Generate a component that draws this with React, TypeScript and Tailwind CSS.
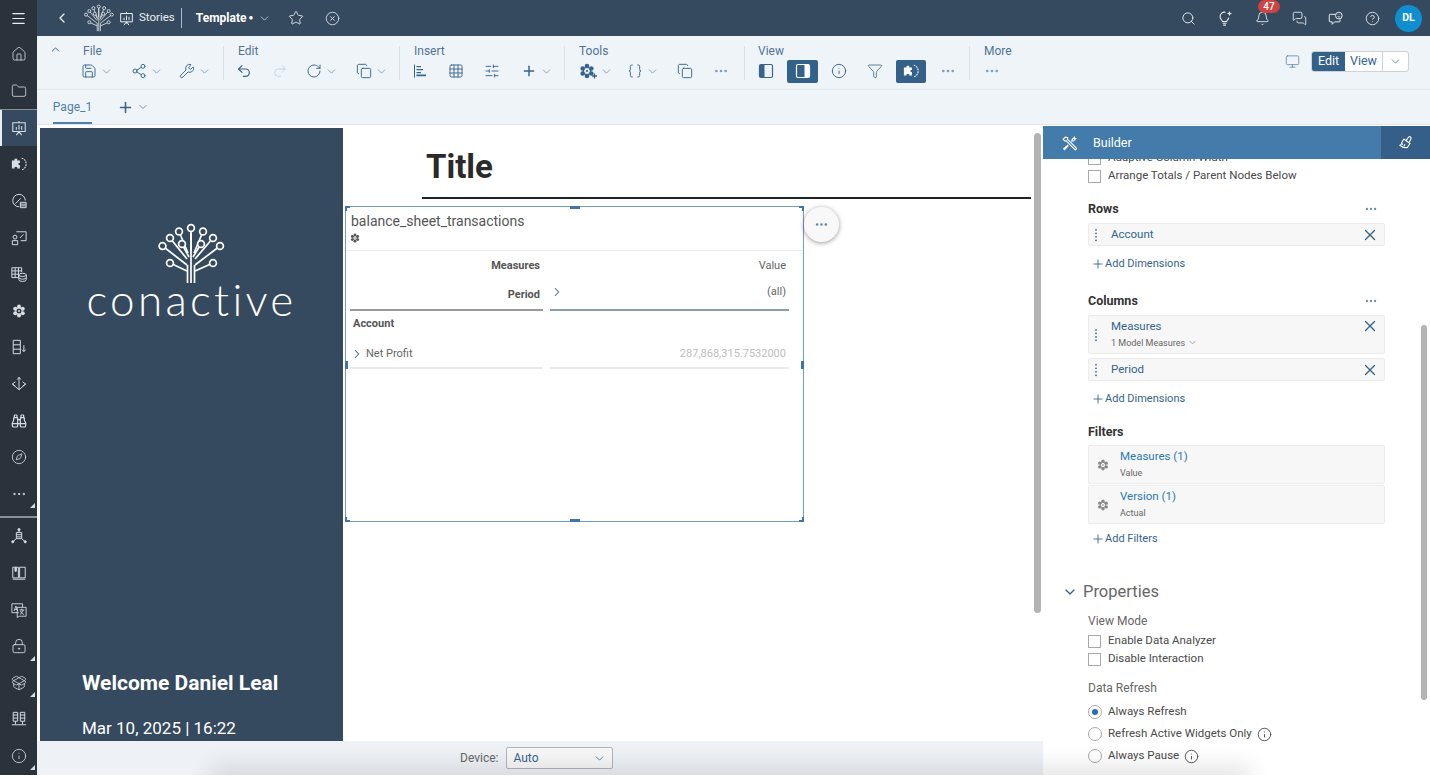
import React from 'react';
import {
  Menu, ChevronLeft, ChevronDown, ChevronUp, ChevronRight, Star, CircleX, Search, Bell, MessagesSquare, CircleHelp,
  House, Folder, Binoculars, Compass, Ellipsis, LockKeyhole, PackageOpen, Info, Save, Share2, Wrench, Undo2, Redo2,
  RotateCw, Copy, Grid3x3, SlidersHorizontal, Plus, Braces, Funnel, Monitor, X,
} from 'lucide-react';

type P = { className?: string };

function Tree({ className }: P) {
  const nodes = [[33, 5, 33, 28], [21, 8.5, 30, 30], [45, 8.5, 36, 30], [12, 15, 29, 36], [55, 15, 37, 36], [4.5, 23, 29, 42], [62, 23, 37, 42], [24, 21, 31, 34], [43, 21, 35, 34], [12, 40, 29, 48], [55, 40, 37, 48]];
  return (
    <svg viewBox="0 0 67 61" className={className} fill="none" stroke="currentColor" strokeWidth="1.7">
      <path d="M29.5 60V42M33 60V10M36.5 60V42" />
      {nodes.map(([x, y, tx, ty], i) => (
        <g key={i}>
          <line x1={x} y1={y} x2={tx} y2={ty} />
          <circle cx={x} cy={y} r="3.4" fill="#354a5f" />
        </g>
      ))}
    </svg>
  );
}

function Cube({ className, plus }: P & { plus?: boolean }) {
  const pts = [[8, 3], [12.3, 5.5], [12.3, 10.5], [8, 13], [3.7, 10.5], [3.7, 5.5]];
  return (
    <svg viewBox={plus ? '0 0 18 16' : '0 0 16 16'} className={className} fill="currentColor">
      {pts.map(([x, y], i) => <circle key={i} cx={x} cy={y} r="2.3" />)}
      <circle cx="8" cy="8" r="3.6" fill="none" stroke="currentColor" strokeWidth="1.2" />
      <circle cx="8" cy="8" r="1.1" />
      {plus && <path d="M13 13h5M15.500 10.500v5" stroke="currentColor" strokeWidth="1.300" />}
    </svg>
  );
}

function PuzzleGear({ className }: P) {
  return (
    <svg viewBox="0 0 18 16" className={className} fill="currentColor">
      <path d="M1 4h3V2h3v2h3v3H8.500v2H10v4H7v-1.500H4V13H1z" />
      <path fill="none" stroke="currentColor" strokeWidth="1.300" strokeDasharray="2 1" d="M12 1.500c3.200.6 5 3.400 5 6.500s-1.800 5.900-5 6.500" />
    </svg>
  );
}

function PanelLeft({ className }: P) {
  return (
    <svg viewBox="0 0 16 16" className={className}>
      <rect x="1.500" y="1.500" width="13" height="13" rx="1.500" fill="none" stroke="currentColor" strokeWidth="1.200" />
      <path d="M2 2h4.500v12H2z" fill="currentColor" />
    </svg>
  );
}

function PanelRight({ className }: P) {
  return (
    <svg viewBox="0 0 16 16" className={className}>
      <rect x="1.500" y="1.500" width="13" height="13" rx="1.500" fill="none" stroke="currentColor" strokeWidth="1.200" />
      <path d="M9.500 2H14v12H9.500z" fill="currentColor" />
    </svg>
  );
}

function ChartBars({ className }: P) {
  return (
    <svg viewBox="0 0 16 16" className={className} fill="currentColor">
      <path d="M2 1.500h1v13H2zM4.500 3H9v1.200H4.500zM4.500 6H11v1.200H4.500zM4.500 9H9v1.200H4.500zM4.500 11.500H14v1.800H4.500z" />
    </svg>
  );
}

function Story({ className }: P) {
  return (
    <svg viewBox="0 0 18 18" className={className} fill="none" stroke="currentColor" strokeWidth="1.200">
      <path d="M2 3h14v10H2zM9 1v2M9 13v2M6 17l3-4 3 4" />
      <path d="M6 11V8M9 11V5.500M12 11V7" />
    </svg>
  );
}

function GaugeDoc({ className }: P) {
  return (
    <svg viewBox="0 0 18 18" className={className} fill="none" stroke="currentColor" strokeWidth="1.100">
      <path d="M9 15.500a7 7 0 117-7" />
      <path d="M5 12l6-6" />
      <path d="M10.500 10.500H17v6h-6.500zM10.500 12.500H17M10.500 14.500H17" />
    </svg>
  );
}

function BoardEdit({ className }: P) {
  return (
    <svg viewBox="0 0 18 18" className={className} fill="none" stroke="currentColor" strokeWidth="1.100">
      <path d="M6 2h11v10h-6" />
      <circle cx="4.500" cy="8" r="2.200" />
      <path d="M1.500 16.500v-4.500h6v4.500zM10 9l4-4" />
    </svg>
  );
}

function TableDb({ className }: P) {
  return (
    <svg viewBox="0 0 18 18" className={className} fill="none" stroke="currentColor" strokeWidth="1.100">
      <path d="M8.500 13H1V2h11v5M1 5.500h11M1 9.200h7.500M4.700 2v11M8.400 2v11" />
      <ellipse cx="13" cy="10" rx="4.200" ry="1.800" />
      <path d="M8.800 10v5.500c0 1 1.900 1.800 4.200 1.800s4.200-.8 4.200-1.800V10M8.800 13c0 1 1.900 1.800 4.200 1.800s4.200-.8 4.200-1.800" />
    </svg>
  );
}

function DbDown({ className }: P) {
  return (
    <svg viewBox="0 0 18 18" className={className} fill="none" stroke="currentColor" strokeWidth="1.100">
      <path d="M2.500 1.500h8v15h-8zM2.500 6.500h8M2.500 11.500h8" />
      <path d="M14.500 7v7M12.500 12l2 2.200 2-2.200" />
    </svg>
  );
}

function Arrows({ className }: P) {
  return (
    <svg viewBox="0 0 18 18" className={className} fill="none" stroke="currentColor" strokeWidth="1.100">
      <path d="M7 4l2-2.500L11 4M9 1.500v14M1.500 9l3.500-2.500M1.500 9l3.500 2.500M1.500 9L9 15.500M16.500 9L13 6.500M16.500 9L13 11.500M16.500 9L9 15.500" />
    </svg>
  );
}

function NetworkDoc({ className }: P) {
  return (
    <svg viewBox="0 0 18 18" className={className} fill="none" stroke="currentColor" strokeWidth="1.100">
      <circle cx="9" cy="1.800" r="1.200" fill="currentColor" />
      <path d="M9 3v2M6 5h6v7H6zM6 7.500h6M6 10h6M6 12l-3.500 3M12 12l3.500 3" />
      <circle cx="2" cy="15.500" r="1.200" fill="currentColor" />
      <circle cx="16" cy="15.500" r="1.200" fill="currentColor" />
    </svg>
  );
}

function Book({ className }: P) {
  return (
    <svg viewBox="0 0 18 18" className={className} fill="none" stroke="currentColor" strokeWidth="1.100">
      <path d="M2 2.500h6.300v12H2zM9.700 2.500H16v12H9.700zM2 16h14" />
      <path d="M4.500 3h1.500v4H4.500z" fill="currentColor" />
    </svg>
  );
}

function Translate({ className }: P) {
  return (
    <svg viewBox="0 0 18 18" className={className} fill="none" stroke="currentColor" strokeWidth="1">
      <path d="M9 12H1V2h12v4" />
      <path d="M7 6h10v10H9.500L7 17.500z" />
      <path d="M3.500 10l2-5.500 2 5.500M4.300 8.300h2.400M9.500 9h5.500M12 7.500V9M10.500 14l3.500-5M10.500 10c.8 1.800 2.500 3.500 4 4" />
    </svg>
  );
}

function Servers({ className }: P) {
  return (
    <svg viewBox="0 0 18 18" className={className} fill="none" stroke="currentColor" strokeWidth="1.100">
      <path d="M2.500 1.500h5v10h-5zM10.500 1.500h5v10h-5zM2.500 4.500h5M10.500 4.500h5M2.500 8h5M10.500 8h5M5 11.500V15M13 11.500V15M1 15.500h16" />
    </svg>
  );
}

function Bubble({ className }: P) {
  return (
    <svg viewBox="0 0 18 18" className={className} fill="none" stroke="currentColor" strokeWidth="1.200">
      <path d="M9 4H2.500A1 1 0 001.500 5v7a1 1 0 001 1H5v3l3-3h5.500a1 1 0 001-1V10" />
      <circle cx="13" cy="5.500" r="4" />
      <path d="M11.500 6.500c.8.8 2.200.8 3 0M11.700 4.300h.4M14 4.300h.4" />
    </svg>
  );
}

function Bulb({ className }: P) {
  return (
    <svg viewBox="0 0 18 18" className={className} fill="none" stroke="currentColor" strokeWidth="1.200">
      <path d="M9.500 2.500A5 5 0 003.500 7.500c0 1.800.9 2.900 1.800 3.800.6.600.8 1.200.8 1.700h4.800c0-.5.200-1.100.8-1.700.8-.8 1.400-1.600 1.600-2.800" />
      <path d="M6.300 15h4.400M7 17h3" />
      <path d="M14 1l.8 2.200L17 4l-2.200.8L14 7l-.8-2.200L11 4l2.200-.8z" fill="currentColor" stroke="none" />
    </svg>
  );
}

function Tools({ className }: P) {
  return (
    <svg viewBox="0 0 16 16" className={className} fill="none" stroke="currentColor" strokeWidth="1.200">
      <path d="M3.500 1.200L1.200 3.500l1.600 1.600 1.400-.2 8 8 2.100 1.900 1.400-1.400-1.900-2.100-8-8 .2-1.400zM10.500 5.500l2-.4 2.200-2.400-1.300-.1-.1-1.300-2.400 2.200-.4 2zM6.500 9.500l-4.700 4.200.9.900 4.200-4.700" />
    </svg>
  );
}

function Painter({ className }: P) {
  return (
    <svg viewBox="0 0 18 18" className={className} fill="none" stroke="currentColor" strokeWidth="1.200" strokeLinejoin="round">
      <path d="M6.500 4.500l7 5-3 4.500c-2 .5-6-.5-8.500-2.500 1.500-.5 2.500-1.500 2-2.500z" />
      <path d="M9 6.300l3-4c.5-.7 1.600-.6 2.200 0s.7 1.600.3 2.200l-2 4M8 10.500l-1.500 2M5.500 9.500l-1 1.500" />
    </svg>
  );
}

function DragDots({ className }: P) {
  return (
    <svg viewBox="0 0 4 16" className={className} fill="currentColor">
      <circle cx="2" cy="2" r="1" /><circle cx="2" cy="6" r="1" /><circle cx="2" cy="10" r="1" /><circle cx="2" cy="14" r="1" />
    </svg>
  );
}

function Rail({ icon, active, tri }: { icon: React.ReactNode; active?: boolean; tri?: boolean }) {
  return (
    <div className={`relative h-[36.6px] flex items-center justify-center shrink-0 text-[#d7dde3] ${active ? 'bg-[#354a5f] border-l-2 border-[#e8eef3] pr-[2px]' : ''}`}>
      {icon}
      {tri && <span className="absolute right-[2px] bottom-[4px] w-0 h-0 border-l-[5px] border-l-transparent border-b-[5px] border-b-[#d7dde3]" />}
    </div>
  );
}

const ri = 'w-[16px] h-[16px]';

function Tool({ className, icon, chev, tone = 'text-[#35648d]' }: { className: string; icon: React.ReactNode; chev?: boolean; tone?: string }) {
  return (
    <div className={`flex items-center shrink-0 ${tone} ${className}`}>
      {icon}
      {chev && <ChevronDown className="w-[13px] h-[13px] ml-[3px] text-[#6a8cab]" strokeWidth={1.4} />}
    </div>
  );
}

function Group({ label, className, children }: { label: string; className: string; children: React.ReactNode }) {
  return (
    <div className={`shrink-0 h-[34px] border-r border-[#d8e0e8] ${className}`}>
      <div className="text-[12px] leading-[12px] text-[#4f7397] -mt-[1px]">{label}</div>
      <div className="flex items-center h-[24px] mt-[2px]">{children}</div>
    </div>
  );
}

const ti = 'w-[16px] h-[16px]';
const s = 1.4;

function Check({ label }: { label: string }) {
  return (
    <div className="flex items-center h-[18px]">
      <span className="w-[13px] h-[13px] border border-[#a9a9a9] bg-white mr-[7px]" />
      <span className="text-[11.500px] text-[#4a4a4a]">{label}</span>
    </div>
  );
}

function Radio({ label, on, info }: { label: string; on?: boolean; info?: boolean }) {
  return (
    <div className="flex items-center h-[22px]">
      <span className="w-[14px] h-[14px] rounded-full border border-[#a9a9a9] bg-white mr-[6px] flex items-center justify-center">
        {on && <span className="w-[6px] h-[6px] rounded-full bg-[#2a6db5]" />}
      </span>
      <span className="text-[11.500px] text-[#4a4a4a]">{label}</span>
      {info && <Info className="w-[15px] h-[15px] ml-[5px] text-[#333]" strokeWidth={1.3} />}
    </div>
  );
}

function Token({ label, sub, tall }: { label: string; sub?: string; tall?: boolean }) {
  return (
    <div className={`flex items-center bg-[#f7f7f7] border border-[#ececec] rounded-[2px] pl-[5px] pr-[5px] ${tall ? 'h-[39px]' : 'h-[23px]'}`}>
      <DragDots className="w-[4px] h-[14px] text-[#35648d] mr-[13px] shrink-0" />
      <div className="flex-1 self-start">
        <div className="text-[11.500px] text-[#35648d] leading-[21px]">{label}</div>
        {sub && (
          <div className="flex items-center text-[9px] leading-[10px] text-[#666]">
            {sub}
            <ChevronDown className="w-[11px] h-[11px] ml-[2px]" strokeWidth={1.2} />
          </div>
        )}
      </div>
      <X className={`w-[18px] h-[18px] text-[#35648d] shrink-0 ${tall ? 'self-start mt-[1px]' : ''}`} strokeWidth={1.8} />
    </div>
  );
}

function FilterToken({ label, sub }: { label: string; sub: string }) {
  return (
    <div className="flex items-center h-[39px] bg-[#f7f7f7] border border-[#ececec] rounded-[2px] pl-[8px]">
      <Cube className="w-[12px] h-[12px] text-[#8a8a8a] mr-[11px]" />
      <div>
        <div className="text-[11.500px] leading-[14px] text-[#2a7ab8] -mt-[2px]">{label}</div>
        <div className="text-[9px] leading-[10px] mt-[5px] text-[#666]">{sub}</div>
      </div>
    </div>
  );
}

function Add({ label }: { label: string }) {
  return (
    <div className="flex items-center h-[14px] pl-[3px] text-[11px] text-[#35648d]">
      <Plus className="w-[14px] h-[14px] mr-[0px]" strokeWidth={1.5} />
      {label}
    </div>
  );
}

function SectionTitle({ label, dots }: { label: string; dots?: boolean }) {
  return (
    <div className="flex items-center justify-between h-[16px] pr-[7px]">
      <span className="text-[12.500px] font-bold text-[#333]">{label}</span>
      {dots && <Ellipsis className="w-[14px] h-[14px] text-[#6a8cab]" strokeWidth={2} />}
    </div>
  );
}

function Handle({ className }: P) {
  return <span className={`absolute bg-[#3f75a6] ${className}`} />;
}

export default function App() {
  return (
    <div className="relative h-[775px] w-[1430px] overflow-hidden flex bg-white font-['Roboto',sans-serif]">
      <aside className="w-[37px] shrink-0 bg-[#2a323c] flex flex-col">
        <div className="h-[36px] shrink-0 flex items-center justify-center text-[#e8edf1]">
          <Menu className="w-[17px] h-[17px]" strokeWidth={1.7} />
        </div>
        <Rail icon={<House className={ri} strokeWidth={1.2} />} />
        <div className="h-[37px] shrink-0 border-b border-[#8a9097] flex items-center justify-center text-[#d7dde3]">
          <Folder className={ri} strokeWidth={1.2} />
        </div>
        <Rail active icon={<Story className={ri} />} />
        <Rail icon={<PuzzleGear className={ri} />} />
        <Rail icon={<GaugeDoc className={ri} />} />
        <Rail icon={<BoardEdit className={ri} />} />
        <Rail icon={<TableDb className={ri} />} />
        <Rail icon={<Cube className="w-[14px] h-[14px]" />} />
        <Rail icon={<DbDown className={ri} />} />
        <Rail icon={<Arrows className={ri} />} />
        <Rail icon={<Binoculars className={ri} strokeWidth={1.8} />} />
        <Rail icon={<Compass className={ri} strokeWidth={1.2} />} />
        <Rail tri icon={<Ellipsis className={ri} strokeWidth={1.5} />} />
        <div className="h-[6px] shrink-0 border-b-2 border-[#8a9097]" />
        <Rail icon={<NetworkDoc className={ri} />} />
        <Rail icon={<Book className={ri} />} />
        <Rail icon={<Translate className={ri} />} />
        <Rail tri icon={<LockKeyhole className={ri} strokeWidth={1.3} />} />
        <Rail tri icon={<PackageOpen className={ri} strokeWidth={1.2} />} />
        <Rail icon={<Servers className={ri} />} />
        <Rail tri icon={<Info className={ri} strokeWidth={1.2} />} />
      </aside>

      <div className="flex-1 min-w-0 flex flex-col">
        <header className="h-[36px] shrink-0 bg-[#354a5f] flex items-center text-[#e8edf1]">
          <ChevronLeft className="w-[16px] h-[16px] ml-[17px]" strokeWidth={2} />
          <Tree className="w-[30px] h-[28px] ml-[14px] text-[#f2f5f7]" />
          <Story className="w-[15px] h-[15px] ml-[5px]" />
          <span className="text-[11.500px] ml-[5px]">Stories</span>
          <span className="w-px h-[20px] bg-[#aeb8c2] ml-[6px]" />
          <span className="text-[12px] font-bold ml-[14px] text-white">Template</span>
          <span className="text-[8px] ml-[2px] text-white">●</span>
          <ChevronDown className="w-[13px] h-[13px] ml-[5px]" strokeWidth={1.3} />
          <Star className="w-[16px] h-[16px] ml-[17px]" strokeWidth={1.3} />
          <CircleX className="w-[15px] h-[15px] ml-[21px]" strokeWidth={1.3} />
          <div className="flex-1" />
          <Search className="w-[15px] h-[15px] mr-[21px]" strokeWidth={1.5} />
          <Bulb className="w-[16px] h-[16px] mr-[22px]" />
          <div className="relative mr-[22px]">
            <Bell className="w-[15px] h-[15px]" strokeWidth={1.4} />
            <span className="absolute -top-[11px] -right-[10px] w-[22px] h-[13px] rounded-full bg-[#d04343] text-white text-[10px] leading-[13px] text-center font-medium">47</span>
          </div>
          <MessagesSquare className="w-[15px] h-[15px] mr-[21px]" strokeWidth={1.4} />
          <Bubble className="w-[15px] h-[15px] mr-[22px]" />
          <CircleHelp className="w-[15px] h-[15px] mr-[15px]" strokeWidth={1.4} />
          <span className="w-[27px] h-[27px] rounded-full bg-[#0f8fd0] text-white text-[10.500px] font-bold flex items-center justify-center mr-[8px]">DL</span>
        </header>

        <div className="h-[54px] shrink-0 bg-[#eff4f9] border-b border-[#e1e8ef] flex items-start pt-[10px]">
          <div className="w-[44px] shrink-0 pl-[12px] -mt-[3px]">
            <ChevronUp className="w-[13px] h-[13px] text-[#35648d]" strokeWidth={1.8} />
          </div>
          <Group label="File" className="w-[143px] pl-0 [&>div:first-child]:pl-[2px]">
            <Tool className="w-[50px]" chev icon={<Save className={ti} strokeWidth={s} />} />
            <Tool className="w-[48px]" chev icon={<Share2 className={ti} strokeWidth={s} />} />
            <Tool className="w-[44px]" chev icon={<Wrench className={ti} strokeWidth={s} />} />
          </Group>
          <Group label="Edit" className="w-[176px] pl-[12px] [&>div:first-child]:pl-[2px]">
            <Tool className="w-[36px]" icon={<Undo2 className={ti} strokeWidth={1.8} />} />
            <Tool className="w-[34px]" tone="text-[#c5d3df]" icon={<Redo2 className={ti} strokeWidth={s} />} />
            <Tool className="w-[50px]" chev icon={<RotateCw className={ti} strokeWidth={s} />} />
            <Tool className="w-[40px]" chev icon={<Copy className={ti} strokeWidth={s} />} />
          </Group>
          <Group label="Insert" className="w-[165px] pl-[12px] [&>div:first-child]:pl-[2px]">
            <Tool className="w-[36px]" icon={<ChartBars className={ti} />} />
            <Tool className="w-[36px]" icon={<Grid3x3 className={ti} strokeWidth={s} />} />
            <Tool className="w-[37px]" icon={<SlidersHorizontal className={ti} strokeWidth={s} />} />
            <Tool className="w-[40px]" chev icon={<Plus className={ti} strokeWidth={2.2} />} />
          </Group>
          <Group label="Tools" className="w-[180px] pl-[14px]">
            <Tool className="w-[48px]" chev icon={<Cube plus className="w-[18px] h-[16px]" />} />
            <Tool className="w-[50px]" chev icon={<Braces className={ti} strokeWidth={s} />} />
            <Tool className="w-[36px]" icon={<Copy className={ti} strokeWidth={s} />} />
            <Tool className="w-[30px]" tone="text-[#7f9db8]" icon={<Ellipsis className={ti} strokeWidth={2} />} />
          </Group>
          <Group label="View" className="w-[225px] pl-[13px]">
            <Tool className="w-[29px]" icon={<PanelLeft className={ti} />} />
            <div className="w-[31px] h-[23px] rounded-[2px] bg-[#346187] text-white flex items-center justify-center mr-[13px]">
              <PanelRight className={ti} />
            </div>
            <Tool className="w-[36px]" icon={<Info className={ti} strokeWidth={s} />} />
            <Tool className="w-[29px]" icon={<Funnel className={ti} strokeWidth={1.2} />} />
            <div className="w-[30px] h-[23px] rounded-[2px] bg-[#346187] text-white flex items-center justify-center mr-[14px]">
              <PuzzleGear className={ti} />
            </div>
            <Tool className="w-[20px]" tone="text-[#7f9db8]" icon={<Ellipsis className={ti} strokeWidth={2} />} />
          </Group>
          <div className="h-[34px] pl-[14px] shrink-0 w-[110px]">
            <div className="text-[12px] leading-[12px] text-[#4f7397] -mt-[1px]">More</div>
            <div className="flex items-center h-[24px] mt-[2px] text-[#7f9db8]"><Ellipsis className={ti} strokeWidth={2} /></div>
          </div>
          <div className="flex-1" />
          <div className="flex items-center h-[22px] mt-[4px] mr-[21px]">
            <Monitor className="w-[15px] h-[15px] text-[#4f7f9f] mr-[11px]" strokeWidth={1.2} />
            <div className="flex items-stretch h-[21px] w-[98px] rounded-[3px] border border-[#cbd2d9] bg-white text-[12.500px] overflow-hidden">
              <span className="w-[33px] bg-[#346187] text-white flex items-center justify-center">Edit</span>
              <span className="w-[38px] text-[#35648d] flex items-center justify-center border-r border-[#cbd2d9]">View</span>
              <span className="flex-1 flex items-center justify-center text-[#35648d]"><ChevronDown className="w-[13px] h-[13px]" strokeWidth={1.3} /></span>
            </div>
          </div>
        </div>

        <div className="h-[35px] shrink-0 bg-[#eff4f9] border-b border-[#dfe6ec] flex items-stretch pl-[16px]">
          <div className="w-[39px] flex items-center justify-center pt-[2px] text-[12px] text-[#4f7fa8] border-b-2 border-[#4f7fa8]">Page_1</div>
          <div className="flex items-center ml-[25px] text-[#35648d]">
            <Plus className="w-[17px] h-[17px]" strokeWidth={2.2} />
            <ChevronDown className="w-[12px] h-[12px] ml-[3px]" strokeWidth={1.4} />
          </div>
        </div>

        <div className="flex-1 min-h-0 flex">
          <div className="w-[1006px] shrink-0 flex flex-col">
            <div className="flex-1 min-h-0 flex bg-white pt-[3px] pl-[3px] relative">
              <div className="w-[303px] shrink-0 bg-[#354a5f] text-white flex flex-col items-center">
                <Tree className="w-[67px] h-[61px] mt-[95px] text-white" />
                <div className="text-[44px] leading-[40px] font-light font-['Lato',sans-serif] tracking-[3.300px] mt-[-5px]">conactive</div>
                <div className="flex-1" />
                <div className="self-start pl-[42px]">
                  <div className="text-[21px] leading-[28px] font-bold">Welcome Daniel Leal</div>
                  <div className="text-[17px] leading-[24px] mt-[19px] mb-[1px]">Mar 10, 2025 | 16:22</div>
                </div>
              </div>
              <div className="flex-1 min-w-0">
                <div className="ml-[79px] mr-[2px] h-[71px] border-b-2 border-[#222]">
                  <div className="pl-[4px] pt-[19px] text-[33px] leading-[40px] font-bold text-[#2a2a2a]">Title</div>
                </div>
                <div className="relative ml-[2px] mt-[7px] w-[459px] h-[316px] border border-[#6f9fc8]">
                  <Handle className="-left-[1px] -top-[1px] w-[5px] h-[2px]" />
                  <Handle className="-left-[1px] -top-[1px] w-[2px] h-[5px]" />
                  <Handle className="-right-[1px] -top-[1px] w-[5px] h-[2px]" />
                  <Handle className="-right-[1px] -top-[1px] w-[2px] h-[5px]" />
                  <Handle className="-left-[1px] -bottom-[1px] w-[5px] h-[2px]" />
                  <Handle className="-left-[1px] -bottom-[1px] w-[2px] h-[5px]" />
                  <Handle className="-right-[1px] -bottom-[1px] w-[5px] h-[2px]" />
                  <Handle className="-right-[1px] -bottom-[1px] w-[2px] h-[5px]" />
                  <Handle className="left-[224px] -top-[1px] w-[10px] h-[3px]" />
                  <Handle className="left-[224px] -bottom-[1px] w-[10px] h-[3px]" />
                  <Handle className="-left-[1px] top-[154px] w-[3px] h-[8px]" />
                  <Handle className="-right-[1px] top-[154px] w-[3px] h-[8px]" />
                  <div className="h-[44px] border-b border-[#ececec] pl-[5px] pt-[5px]">
                    <div className="text-[14px] leading-[18px] text-[#555]">balance_sheet_transactions</div>
                    <Cube className="w-[10px] h-[10px] text-[#555] mt-[3px] -ml-[1px]" />
                  </div>
                  <div className="grid grid-cols-[193px_239px] gap-x-[7px] pl-[4px] text-[11px]">
                    <div className="h-[31px] flex items-center justify-end pr-[3px] font-bold text-[#555]">Measures</div>
                    <div className="h-[31px] flex items-center justify-end pr-[3px] text-[#666]">Value</div>
                    <div className="h-[29px] flex items-center justify-end pr-[3px] font-bold text-[#555] border-b-2 border-[#999]">Period</div>
                    <div className="h-[29px] flex items-center justify-between pr-[3px] pl-[0px] pb-[7px] text-[#666] border-b-2 border-[#8d9bb0]">
                      <ChevronRight className="w-[14px] h-[14px] text-[#35648d]" strokeWidth={1.8} />
                      <span>(all)</span>
                    </div>
                    <div className="col-span-2 h-[27px] flex items-center pl-[3px] font-bold text-[#555]">Account</div>
                    <div className="h-[31px] flex items-center pt-[3px] text-[#666] border-b-2 border-[#eaeaea]">
                      <ChevronRight className="w-[14px] h-[14px] text-[#35648d] mr-[2px]" strokeWidth={1.8} />
                      <span>Net Profit</span>
                    </div>
                    <div className="h-[31px] flex items-center justify-end pt-[3px] pr-[3px] text-[#bdbdbd] border-b-2 border-[#eaeaea]">287,868,315.7532000</div>
                  </div>
                  <div className="absolute left-[458px] top-[0px] w-[35px] h-[35px] rounded-full bg-[#f8f8f8] shadow-[0_1px_5px_rgba(0,0,0,0.4)] flex items-center justify-center text-[#5d87aa]">
                    <Ellipsis className="w-[15px] h-[15px]" strokeWidth={2.2} />
                  </div>
                </div>
              </div>
              <div className="w-[7px] shrink-0 mt-[5px] mb-[128px] mr-[2px] ml-[1px] rounded-full bg-[#b4b4b4]" />
            </div>
            <div className="h-[34px] shrink-0 bg-[#eef2f6] flex items-center pl-[423px] text-[12px] text-[#666]">
              <span className="mr-[8px]">Device:</span>
              <div className="w-[107px] h-[22px] flex items-center justify-between px-[6px] bg-[#f7f7f7] border border-[#b0b5ba] rounded-[2px] text-[#35648d]">
                Auto
                <ChevronDown className="w-[13px] h-[13px]" strokeWidth={1.4} />
              </div>
            </div>
          </div>
          <div className="flex-1 min-w-0 flex flex-col pl-0 ml-[0px] bg-white">
            <div className="h-[33px] mt-[1px] shrink-0 flex items-stretch bg-[#437bab] text-white">
              <div className="flex-1 flex items-center pl-[19px] pt-[1px]">
                <Tools className="w-[15px] h-[15px]" />
                <span className="text-[12.500px] ml-[16px]">Builder</span>
              </div>
              <div className="w-[49px] bg-[#355f88] flex items-center justify-center">
                <Painter className="w-[16px] h-[16px]" />
              </div>
            </div>
            <div className="relative flex-1 min-h-0 overflow-hidden pl-[45px] pr-[45px]">
              <div className="h-[8px] overflow-hidden">
                <div className="flex items-center h-[18px] -mt-[10px]">
                  <span className="w-[13px] h-[13px] border border-[#a9a9a9] mr-[7px]" />
                  <span className="text-[11.500px] text-[#4a4a4a]">Adaptive Column Width</span>
                </div>
              </div>
              <Check label="Arrange Totals / Parent Nodes Below" />
              <div className="mt-[16px]"><SectionTitle label="Rows" dots /></div>
              <div className="mt-[6px]"><Token label="Account" /></div>
              <div className="mt-[11px]"><Add label="Add Dimensions" /></div>
              <div className="mt-[22px]"><SectionTitle label="Columns" dots /></div>
              <div className="mt-[6px]"><Token tall label="Measures" sub="1 Model Measures" /></div>
              <div className="mt-[4px]"><Token label="Period" /></div>
              <div className="mt-[11px]"><Add label="Add Dimensions" /></div>
              <div className="mt-[18px]"><SectionTitle label="Filters" /></div>
              <div className="mt-[5px]"><FilterToken label="Measures (1)" sub="Value" /></div>
              <div className="mt-[1px]"><FilterToken label="Version (1)" sub="Actual" /></div>
              <div className="mt-[8px]"><Add label="Add Filters" /></div>
              <div className="flex items-center -ml-[26px] mt-[34px] h-[24px]">
                <ChevronDown className="w-[16px] h-[16px] text-[#35648d] mr-[5px]" strokeWidth={2} />
                <span className="text-[16.500px] text-[#666]">Properties</span>
              </div>
              <div className="text-[12px] leading-[16px] text-[#666] mt-[9px]">View Mode</div>
              <div className="mt-[3px]"><Check label="Enable Data Analyzer" /></div>
              <Check label="Disable Interaction" />
              <div className="text-[12px] leading-[16px] text-[#666] mt-[12px]">Data Refresh</div>
              <div className="mt-[5px]"><Radio on label="Always Refresh" /></div>
              <Radio info label="Refresh Active Widgets Only" />
              <Radio info label="Always Pause" />
              <div className="absolute right-[3px] top-[166px] w-[6px] h-[375px] rounded-full bg-[#b4b4b4]" />
            </div>
          </div>
        </div>
      </div>
      <div className="absolute left-[220px] right-[190px] -bottom-[10px] h-[10px] shadow-[0_0_22px_10px_rgba(0,0,0,0.1)] pointer-events-none" />
    </div>
  );
}
